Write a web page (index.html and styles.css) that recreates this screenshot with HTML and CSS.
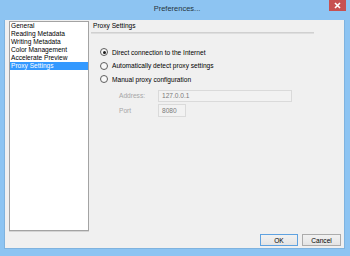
FILE: index.html
```html
<!DOCTYPE html>
<html lang="en">
<head>
    <meta charset="UTF-8">
    <title>Preferences...</title>
    <link rel="stylesheet" href="styles.css">
</head>
<body>

    <div class="window">
        <div class="titlebar">
            <div class="spacer"></div>
            <div class="title">Preferences...</div>
            <div class="close-btn">
                <svg width="7" height="7" viewBox="0 0 7 7">
                    <path d="M1 1 L6 6 M6 1 L1 6" stroke="#fff" stroke-width="1.6"/>
                </svg>
            </div>
        </div>

        <div class="client">
            <div class="content">
                <ul class="pages">
                    <li>General</li>
                    <li>Reading Metadata</li>
                    <li>Writing Metadata</li>
                    <li>Color Management</li>
                    <li>Accelerate Preview</li>
                    <li class="selected">Proxy Settings</li>
                </ul>

                <div class="panel">
                    <div class="panel-header">Proxy Settings</div>

                    <div class="options">
                        <div class="radio-row">
                            <span class="radio checked"></span>
                            <span>Direct connection to the Internet</span>
                        </div>
                        <div class="radio-row">
                            <span class="radio"></span>
                            <span>Automatically detect proxy settings</span>
                        </div>
                        <div class="radio-row">
                            <span class="radio"></span>
                            <span>Manual proxy configuration</span>
                        </div>
                    </div>

                    <div class="manual">
                        <div class="field">
                            <span class="field-label">Address:</span>
                            <span class="input address">127.0.0.1</span>
                        </div>
                        <div class="field">
                            <span class="field-label">Port</span>
                            <span class="input port">8080</span>
                        </div>
                    </div>
                </div>
            </div>

            <div class="footer">
                <button class="btn default">OK</button>
                <button class="btn">Cancel</button>
            </div>
        </div>
    </div>

</body>
</html>
```

FILE: styles.css
```css
body {
    margin: 0;
    padding: 0;
    font-family: "Liberation Sans", Arial, sans-serif;
    font-size: 6.6px;
    color: #000;
}

.window {
    width: 350px;
    height: 256px;
    background-color: #8dc4f2;
    padding: 0 5px 7px 4px;
    box-sizing: border-box;
    display: flex;
    flex-direction: column;
}

.titlebar {
    height: 20px;
    display: flex;
    align-items: flex-start;
    margin-right: -5px;
}

.spacer {
    width: 21px;
}

.title {
    flex: 1;
    text-align: center;
    font-size: 7.5px;
    line-height: 17px;
    color: #263440;
}

.close-btn {
    width: 17px;
    height: 11px;
    margin-right: 4px;
    background-color: #c75050;
    display: flex;
    align-items: center;
    justify-content: center;
}

.client {
    flex: 1;
    background-color: #f0f0f0;
    border: 1px solid #7fb3df;
    border-top: none;
    display: flex;
    flex-direction: column;
}

.content {
    flex: 1;
    display: flex;
    padding: 1px 0 0 4px;
}

.pages {
    list-style: none;
    margin: 0;
    padding: 0;
    width: 78px;
    height: 208px;
    background: #fff;
    border: 1px solid #a3a3a3;
    box-shadow: 0 1px 0 #d4d4d4;
}

.pages li {
    height: 8px;
    line-height: 8px;
    padding-left: 1px;
    white-space: nowrap;
}

.pages li.selected {
    background-color: #3399ff;
    color: #fff;
}

.panel {
    margin-left: 2px;
    flex: 1;
}

.panel-header {
    width: 221px;
    height: 11px;
    line-height: 10px;
    padding-left: 2px;
    border-bottom: 1px solid #d0d0d0;
    box-shadow: 0 1px 0 #dedede;
}

.options {
    padding: 12.5px 0 0 9px;
}

.radio-row {
    height: 13.5px;
    display: flex;
    align-items: center;
    gap: 4px;
}

.radio {
    width: 6px;
    height: 6px;
    border: 1px solid #5e5e5e;
    border-radius: 50%;
    background: #f8f8f8;
    display: flex;
    align-items: center;
    justify-content: center;
}

.radio.checked::after {
    content: "";
    width: 3px;
    height: 3px;
    border-radius: 50%;
    background: #1c1c1c;
}

.manual {
    padding: 3.5px 0 0 28px;
    display: flex;
    flex-direction: column;
    gap: 2px;
}

.field {
    display: flex;
    align-items: center;
}

.field-label {
    width: 39px;
    color: #a6a6a6;
}

.input {
    height: 10px;
    line-height: 10px;
    padding-left: 3px;
    border: 1px solid #dadada;
    background: #f2f2f2;
    color: #7a7a7a;
    box-sizing: content-box;
}

.input.address {
    width: 129px;
}

.input.port {
    width: 23px;
    height: 11px;
    line-height: 11px;
}

.footer {
    display: flex;
    justify-content: flex-end;
    gap: 4px;
    padding: 0 3px 2px 0;
}

.btn {
    width: 39px;
    height: 12px;
    padding: 0;
    font-family: "Liberation Sans", Arial, sans-serif;
    font-size: 6.6px;
    color: #000;
    background: linear-gradient(#f2f2f2, #e4e4e4);
    border: 1px solid #acacac;
    border-radius: 0;
}

.btn.default {
    width: 38px;
    border-color: #5fa2e0;
}
```
